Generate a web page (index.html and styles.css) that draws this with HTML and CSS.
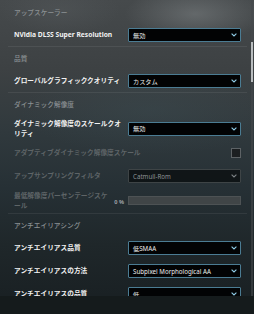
FILE: index.html
```html
<!DOCTYPE html>
<html lang="ja">
<head>
<meta charset="utf-8">
<link rel="stylesheet" href="styles.css">
</head>
<body>
<div class="screen">
  <div class="list">
    <section class="section">
      <div class="section-title">アップスケーラー</div>
      <div class="row">
        <div class="label">NVidia DLSS Super Resolution</div>
        <div class="select"><span>無効</span><svg class="chev" viewBox="0 0 6 4"><path d="M0.6 0.6 L3 3 L5.4 0.6"/></svg></div>
      </div>
    </section>
    <section class="section">
      <div class="section-title">品質</div>
      <div class="row">
        <div class="label">グローバルグラフィッククオリティ</div>
        <div class="select"><span>カスタム</span><svg class="chev" viewBox="0 0 6 4"><path d="M0.6 0.6 L3 3 L5.4 0.6"/></svg></div>
      </div>
    </section>
    <section class="section">
      <div class="section-title">ダイナミック解像度</div>
      <div class="row tall">
        <div class="label">ダイナミック解像度のスケールクオリティ</div>
        <div class="select"><span>無効</span><svg class="chev" viewBox="0 0 6 4"><path d="M0.6 0.6 L3 3 L5.4 0.6"/></svg></div>
      </div>
      <div class="row disabled">
        <div class="label wide">アダプティブダイナミック解像度スケール</div>
        <div class="checkbox"></div>
      </div>
      <div class="row disabled">
        <div class="label">アップサンプリングフィルタ</div>
        <div class="select off"><span>Catmull-Rom</span><svg class="chev" viewBox="0 0 6 4"><path d="M0.6 0.6 L3 3 L5.4 0.6"/></svg></div>
      </div>
      <div class="row tall disabled">
        <div class="label narrow">最低解像度パーセンテージスケール</div>
        <div class="value">0 %</div>
        <div class="slider"></div>
      </div>
    </section>
    <section class="section">
      <div class="section-title">アンチエイリアシング</div>
      <div class="row">
        <div class="label">アンチエイリアス品質</div>
        <div class="select"><span>低SMAA</span><svg class="chev" viewBox="0 0 6 4"><path d="M0.6 0.6 L3 3 L5.4 0.6"/></svg></div>
      </div>
      <div class="row">
        <div class="label">アンチエイリアスの方法</div>
        <div class="select"><span>Subpixel Morphological AA</span><svg class="chev" viewBox="0 0 6 4"><path d="M0.6 0.6 L3 3 L5.4 0.6"/></svg></div>
      </div>
      <div class="row">
        <div class="label">アンチエイリアスの品質</div>
        <div class="select"><span>低</span><svg class="chev" viewBox="0 0 6 4"><path d="M0.6 0.6 L3 3 L5.4 0.6"/></svg></div>
      </div>
    </section>
  </div>
  <div class="scrollbar"><div class="thumb"></div></div>
  <div class="footer"></div>
</div>
</body>
</html>
```
FILE: styles.css
```css
* { box-sizing: border-box; }
html, body { margin: 0; padding: 0; }
body {
  font-family: "Noto Sans", "Noto Sans CJK JP", sans-serif;
  background: #1b2225;
}
.screen {
  width: 254px;
  height: 314px;
  position: relative;
  overflow: hidden;
  background:
    radial-gradient(ellipse 70px 28px at 195px 14px, rgba(125,130,132,0.55), rgba(125,130,132,0)),
    radial-gradient(ellipse 60px 25px at 60px 10px, rgba(90,95,98,0.35), rgba(90,95,98,0)),
    radial-gradient(ellipse 130px 45px at 150px 110px, rgba(60,78,84,0.35), rgba(60,78,84,0)),
    linear-gradient(180deg, #464a4c 0%, #3d4143 22%, #30393d 42%, #263035 60%, #1f272a 78%, #1a2124 94%);
}
.list {
  margin-left: 8px;
  width: 239px;
}
.section {
  border-bottom: 1px solid rgba(255,255,255,0.07);
  display: flex;
  flex-direction: column;
  gap: 1px;
}
.section:first-child { padding-top: 1px; }
.section:last-child { border-bottom: none; }
.section-title {
  height: 22px;
  display: flex;
  align-items: center;
  padding: 0 6px;
  font-size: 6.7px;
  color: #8a9093;
  font-weight: 500;
}
.row {
  min-height: 22px;
  display: flex;
  align-items: center;
  padding: 0 6px;
  gap: 4px;
}
.row.tall { min-height: 25px; }
.label {
  width: 110px;
  flex: none;
  font-size: 6.7px;
  line-height: 10px;
  font-weight: 700;
  color: #f2f2f2;
}
.label.wide { width: auto; flex: 1; }
.label.narrow { width: 100px; }
.row.disabled .label { color: #5e6467; }
.value {
  width: 10px;
  flex: none;
  font-size: 5.6px;
  font-weight: 700;
  color: #9a9fa2;
  text-align: right;
  white-space: nowrap;
  margin-left: -4px;
  margin-top: 2px;
}
.select {
  width: 113px;
  height: 14px;
  flex: none;
  display: flex;
  align-items: center;
  justify-content: space-between;
  padding: 0 3px 0 4px;
  background: #020304;
  border: 1px solid #4b7c93;
  border-radius: 1px;
  font-size: 6.2px;
  color: #ececec;
  white-space: nowrap;
}
.chev {
  width: 6px;
  height: 4px;
  fill: none;
  stroke: #8fcbe6;
  stroke-width: 1.1;
}
.select.off {
  background: rgba(8,12,14,0.75);
  border-color: #3e4446;
  color: #8d9295;
}
.select.off .chev { stroke: #7d8386; }
.checkbox {
  width: 10px;
  height: 10px;
  flex: none;
  border: 1px solid #5d6265;
  background: #1c1f21;
}
.slider {
  width: 113px;
  height: 9px;
  flex: none;
  background: #404547;
  border: 1px solid #4d5254;
  margin-top: -1px;
}
.scrollbar {
  position: absolute;
  left: 251px;
  top: 0;
  width: 2px;
  height: 296px;
  background: rgba(70,74,77,0.6);
}
.thumb {
  margin-top: 42px;
  height: 40px;
  background: #b9bdbf;
}
.footer {
  position: absolute;
  left: 0;
  top: 296px;
  width: 254px;
  height: 18px;
  background: #151b1c;
}
```
